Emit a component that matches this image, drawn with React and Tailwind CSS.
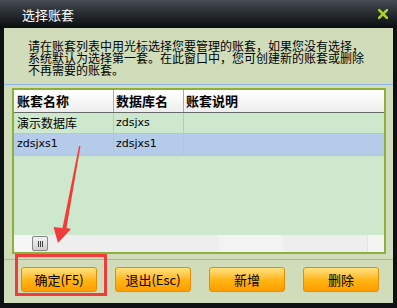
import React from "react";

const cjk = { fontFamily: '"Noto Sans CJK SC", "Noto Sans", sans-serif' };
const latin = { fontFamily: '"DejaVu Sans", "Noto Sans CJK SC", sans-serif' };

function Btn({ children }) {
  return (
    <div className="h-[25px] w-[76px] rounded-[3px] border border-[#e48f00] bg-gradient-to-b from-[#ffe27a] via-[#ffb714] to-[#ff9c00] flex items-center justify-center text-[13px] text-black">
      {children}
    </div>
  );
}

export default function App() {
  return (
    <div className="relative w-[397px] h-[308px] bg-[#0e1114] flex flex-col overflow-hidden" style={cjk}>
      {/* title bar */}
      <div className="h-[28px] shrink-0 bg-gradient-to-b from-[#474d53] to-[#0a0d10] flex items-center justify-between pl-[22px] pr-[9px]">
        <span className="text-white text-[13px] leading-none">选择账套</span>
        <svg width="10" height="10" viewBox="0 0 10 10">
          <path d="M1 1 L9 9 M9 1 L1 9" stroke="#a8d12a" strokeWidth="2.6" strokeLinecap="square" />
        </svg>
      </div>

      {/* body */}
      <div className="ml-[4px] w-[389px] h-[275px] shrink-0 bg-[#d1dcbb] flex flex-col">
        <div className="h-[56px] shrink-0 pl-[24px] pt-[12px] text-[12px] leading-[12px] text-black">
          <div className="whitespace-nowrap">请在账套列表中用光标选择您要管理的账套，如果您没有选择，</div>
          <div className="whitespace-nowrap">系统默认为选择第一套。在此窗口中，您可创建新的账套或删除</div>
          <div className="whitespace-nowrap">不再需要的账套。</div>
        </div>
        <div className="h-px shrink-0 bg-[#8fb6e6]" />

        {/* table panel */}
        <div className="mt-[3px] ml-[8px] w-[374px] h-[166px] shrink-0 border-2 border-[#8cb03c] bg-[#cde8cd] flex flex-col">
          <div className="h-[23px] shrink-0 flex bg-gradient-to-b from-[#ffffff] to-[#eeeeee] border-b border-[#6a6a6a] text-[13px] font-bold text-black">
            <div className="w-[100px] shrink-0 border-r border-[#a9a9a9] pl-[3px] flex items-center">账套名称</div>
            <div className="w-[70px] shrink-0 border-r border-[#a9a9a9] pl-[2px] flex items-center">数据库名</div>
            <div className="flex-1 pl-[2px] flex items-center">账套说明</div>
          </div>
          <div className="h-[21px] shrink-0 flex border-b border-[#c2c2c2] text-[12px] text-black">
            <div className="w-[100px] shrink-0 border-r border-[#c2c2c2] pl-[3px] flex items-center">演示数据库</div>
            <div className="w-[70px] shrink-0 border-r border-[#c2c2c2] pl-[2px] flex items-center text-[11px]" style={latin}>zdsjxs</div>
            <div className="flex-1" />
          </div>
          <div className="h-[22px] shrink-0 flex bg-[#b4cbea] border-b border-[#c2c2c2] text-[11px] text-black" style={latin}>
            <div className="w-[100px] shrink-0 border-r border-[#c2c2c2] pl-[3px] flex items-center">zdsjxs1</div>
            <div className="w-[70px] shrink-0 border-r border-[#c2c2c2] pl-[2px] flex items-center">zdsjxs1</div>
            <div className="flex-1" />
          </div>
          <div className="flex-1" />
          {/* horizontal scrollbar */}
          <div className="h-[17px] shrink-0 bg-[#eeeeee] flex items-center">
            <div className="w-[18px] h-full bg-[#f6f6f6]" />
            <div className="w-[16px] h-[15px] rounded-[2px] border border-[#858585] bg-gradient-to-b from-[#f4f4f4] to-[#cfcfcf] flex items-center justify-center gap-[1px]">
              <div className="w-px h-[6px] bg-[#404040]" />
              <div className="w-px h-[6px] bg-[#404040]" />
              <div className="w-px h-[6px] bg-[#404040]" />
            </div>
            <div className="flex-1 h-full flex">
              <div className="ml-[171px] w-[64px] h-full bg-[#f3f3f3]" />
            </div>
            <div className="w-[17px] h-full bg-[#f4f4f4] border-l border-[#e2e2e2]" />
          </div>
        </div>

        <div className="mt-[5px] h-px shrink-0 bg-[#8fb6e6]" />

        {/* buttons */}
        <div className="mt-[7px] pl-[17px] flex gap-[18px]">
          <Btn>确定(F5)</Btn>
          <Btn>退出(Esc)</Btn>
          <Btn>新增</Btn>
          <Btn>删除</Btn>
        </div>
      </div>

      {/* annotation overlays */}
      <div className="absolute left-[15px] top-[254px] w-[92px] h-[42px] border-[3px] border-[#f23c3c] pointer-events-none" />
      <svg className="absolute left-0 top-0 pointer-events-none" width="397" height="308" viewBox="0 0 397 308">
        <polygon points="79,146 80.5,146 66.5,228 71,229 58,243 53.5,227 62.5,228" fill="#f23c3c" />
      </svg>
    </div>
  );
}
